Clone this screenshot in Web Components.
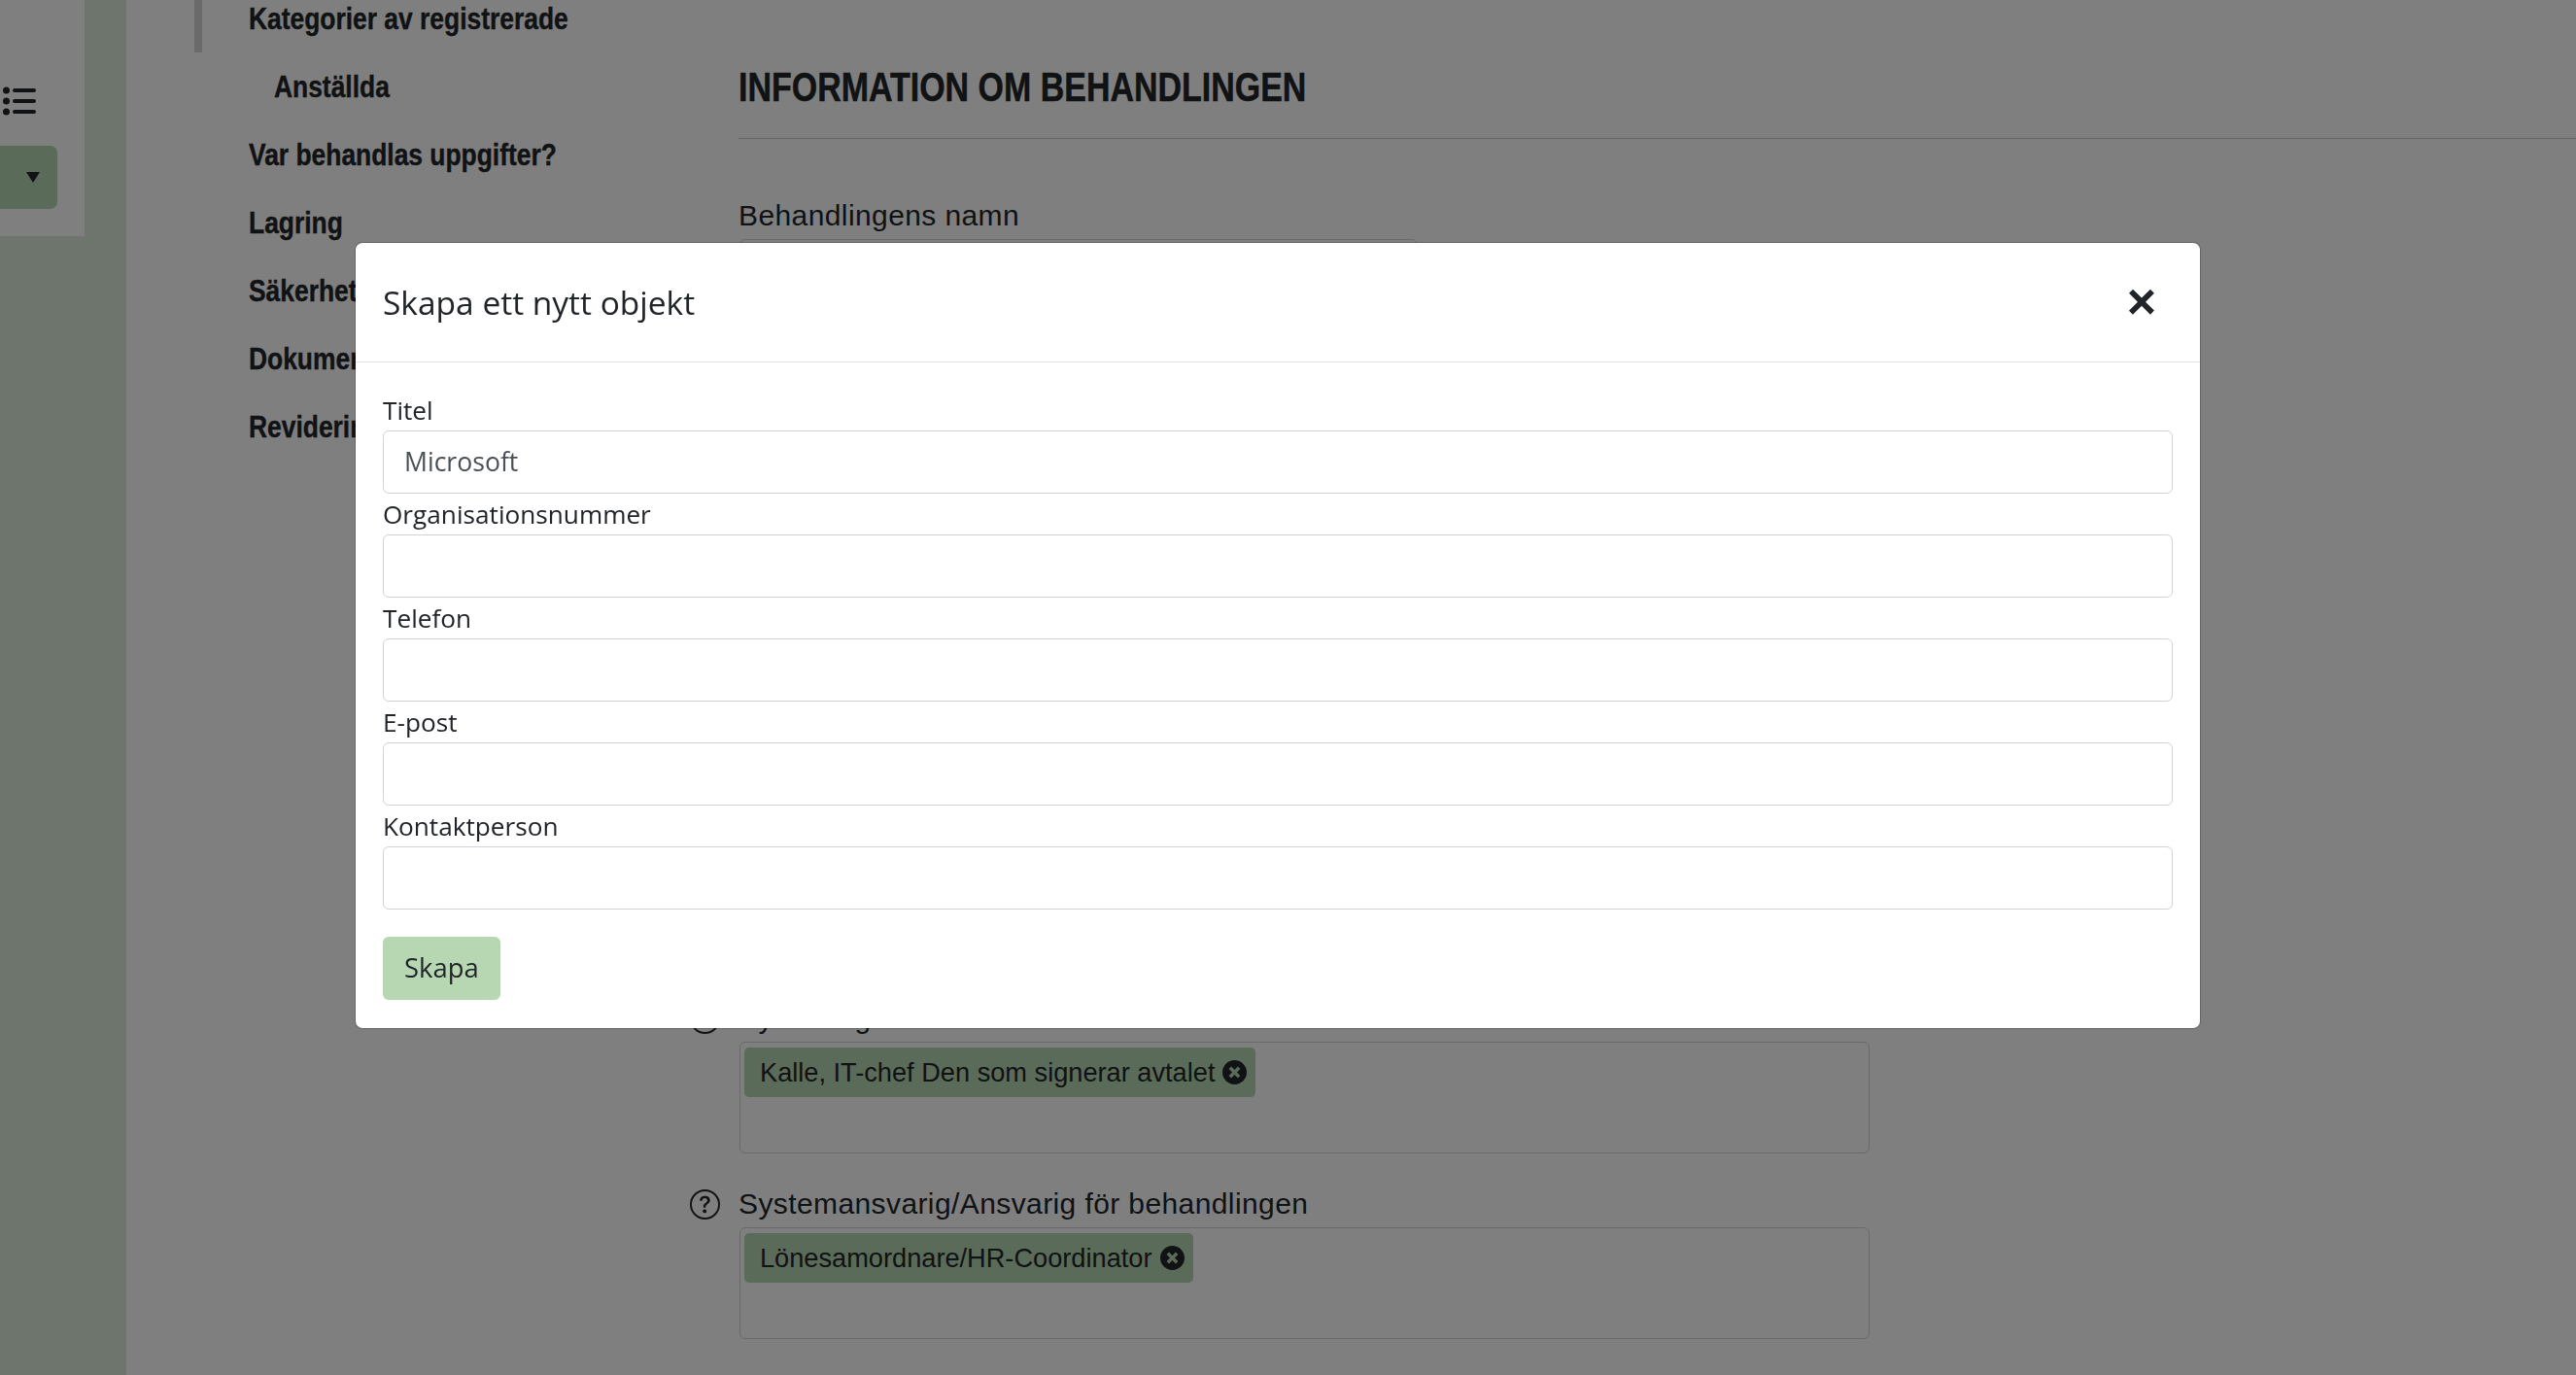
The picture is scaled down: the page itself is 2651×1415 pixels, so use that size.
<!DOCTYPE html>
<html lang="sv">
<head>
<meta charset="utf-8">
<title>Information om behandlingen</title>
<style>
  html, body { margin: 0; height: 100%; overflow: hidden; background: #fff; }
  body { color: #212529; font-family: "Liberation Sans", Arial, sans-serif; }
</style>
</head>
<body>
<app-page>
  <side-rail slot="rail"></side-rail>
  <section-nav slot="nav">
    <nav-item active>Kategorier av registrerade</nav-item>
    <nav-item sub>Anställda</nav-item>
    <nav-item>Var behandlas uppgifter?</nav-item>
    <nav-item>Lagring</nav-item>
    <nav-item>Säkerhet</nav-item>
    <nav-item>Dokumentation</nav-item>
    <nav-item>Revidering</nav-item>
  </section-nav>
  <main-panel slot="main">
    <form-field label="Behandlingens namn" kind="input"></form-field>
    <form-field label="Systemägare" help kind="tags" class="owner">
      <tag-chip>Kalle, IT-chef Den som signerar avtalet</tag-chip>
    </form-field>
    <form-field label="Systemansvarig/Ansvarig för behandlingen" help kind="tags">
      <tag-chip>Lönesamordnare/HR-Coordinator</tag-chip>
    </form-field>
  </main-panel>
</app-page>

<modal-dialog title-text="Skapa ett nytt objekt">
  <modal-field label="Titel">Microsoft</modal-field>
  <modal-field label="Organisationsnummer"></modal-field>
  <modal-field label="Telefon"></modal-field>
  <modal-field label="E-post"></modal-field>
  <modal-field label="Kontaktperson"></modal-field>
  <modal-button>Skapa</modal-button>
</modal-dialog>

<script>
class AppPage extends HTMLElement {
  constructor() {
    super();
    this.attachShadow({ mode: 'open' });
    this.shadowRoot.innerHTML = `
      <style>
        :host { display: grid; grid-template-columns: 130px 630px 1fr; height: 1415px; overflow: hidden; }
      </style>
      <slot name="rail"></slot>
      <slot name="nav"></slot>
      <slot name="main"></slot>
    `;
  }
}

class SideRail extends HTMLElement {
  constructor() {
    super();
    this.attachShadow({ mode: 'open' });
    this.shadowRoot.innerHTML = `
      <style>
        :host { display: block; background: #dbebd9; }
        .panel { width: 87px; height: 243px; background: #fff; box-sizing: border-box; padding-top: 89px; }
        svg { display: block; }
        .list { margin-left: 3px; }
        .menu {
          width: 59px; height: 65px; margin-top: 31px;
          background: #b7d7b2; border-radius: 0 7px 7px 0;
          display: flex; align-items: center; justify-content: flex-end; padding-right: 18px; box-sizing: border-box;
        }
      </style>
      <div class="panel">
        <svg class="list" width="34" height="30" viewBox="0 0 34 30" fill="#212529" stroke="#212529">
          <circle cx="3.5" cy="4" r="3.5" stroke="none"/><circle cx="3.5" cy="15" r="3.5" stroke="none"/><circle cx="3.5" cy="26" r="3.5" stroke="none"/>
          <path d="M12 4H32M12 15H32M12 26H32" stroke-width="4" stroke-linecap="round" fill="none"/>
        </svg>
        <div class="menu">
          <svg width="14" height="11" viewBox="0 0 14 11"><path d="M0 0H14L7 11Z" fill="#212529"/></svg>
        </div>
      </div>
    `;
  }
}

class SectionNav extends HTMLElement {
  constructor() {
    super();
    this.attachShadow({ mode: 'open' });
    this.shadowRoot.innerHTML = `
      <style>
        :host { display: block; margin: -16px 0 0 70px; }
      </style>
      <slot></slot>
    `;
  }
}

/* no condensed face is installed, so the bold labels are squeezed horizontally */
class NavItem extends HTMLElement {
  constructor() {
    super();
    this.attachShadow({ mode: 'open' });
    this.shadowRoot.innerHTML = `
      <style>
        :host {
          display: block; height: 70px; box-sizing: border-box;
          padding-left: 56px; white-space: nowrap;
          font: bold 32px/70px "Liberation Sans", sans-serif;
        }
        :host([active]) { border-left: 8px solid #d4d4d4; padding-left: 48px; }
        :host([sub]) { padding-left: 82px; }
        span {
          display: inline-block; transform: scaleX(.825); transform-origin: left center;
          -webkit-text-stroke: .4px currentColor;
        }
      </style>
      <span><slot></slot></span>
    `;
  }
}

class MainPanel extends HTMLElement {
  constructor() {
    super();
    this.attachShadow({ mode: 'open' });
    this.shadowRoot.innerHTML = `
      <style>
        :host { display: block; }
        header { height: 142px; border-bottom: 1px solid #ccc; }
        h1 {
          display: inline-block; margin: 59px 0 0;
          font: bold 43px/60px "Liberation Sans", sans-serif; text-transform: uppercase; white-space: nowrap;
          transform: scaleX(.79); transform-origin: left center;
          -webkit-text-stroke: .5px currentColor;
        }
      </style>
      <header><h1>Information om behandlingen</h1></header>
      <slot></slot>
    `;
  }
}

class FormField extends HTMLElement {
  constructor() {
    super();
    this.attachShadow({ mode: 'open' });
  }
  connectedCallback() {
    const label = this.getAttribute('label');
    const isTags = this.getAttribute('kind') === 'tags';
    const help = this.hasAttribute('help') ? `
      <svg class="help" width="31" height="31" viewBox="0 0 16 16" fill="#212529">
        <path d="M8 15A7 7 0 1 1 8 1a7 7 0 0 1 0 14zm0 1A8 8 0 1 0 8 0a8 8 0 0 0 0 16z"/>
        <path d="M5.255 5.786a.237.237 0 0 0 .241.247h.825c.138 0 .248-.113.266-.25.09-.656.54-1.134 1.342-1.134.686 0 1.314.343 1.314 1.168 0 .635-.374.927-.965 1.371-.673.489-1.206 1.06-1.168 1.987l.003.217a.25.25 0 0 0 .25.246h.811a.25.25 0 0 0 .25-.25v-.105c0-.718.273-.927 1.01-1.486.609-.463 1.244-.977 1.244-2.056 0-1.511-1.276-2.241-2.673-2.241-1.267 0-2.655.59-2.75 2.286zm1.557 5.763c0 .533.425.927 1.01.927.609 0 1.028-.394 1.028-.927 0-.552-.42-.94-1.029-.94-.584 0-1.009.388-1.009.94z"/>
      </svg>` : '';
    this.shadowRoot.innerHTML = `
      <style>
        :host { display: block; margin-top: 30px; }
        :host([kind="input"]) { margin-top: 57px; }
        :host(.owner) { margin-top: 715px; }
        .label {
          display: flex; align-items: center; height: 44px; margin-bottom: 2px;
          font-size: 30px; letter-spacing: .4px; white-space: nowrap;
        }
        .help { margin-left: -50px; margin-right: 19px; flex: none; }
        .box {
          width: 1163px; box-sizing: border-box; height: 115px; margin-left: 1px;
          border: 1px solid #ced4da; border-radius: 6px; padding: 5px 4px;
        }
        .box.input { width: 698px; height: 65px; }
      </style>
      <div class="label">${help}${label}</div>
      <div class="box ${isTags ? 'tags' : 'input'}"><slot></slot></div>
    `;
  }
}

class TagChip extends HTMLElement {
  constructor() {
    super();
    this.attachShadow({ mode: 'open' });
    this.shadowRoot.innerHTML = `
      <style>
        :host {
          display: inline-flex; align-items: center; gap: 8px;
          height: 51px; padding: 0 9px 0 16px; box-sizing: border-box;
          background: #b7d7b2; border-radius: 5px; font-size: 27.2px; white-space: nowrap;
        }
        svg { flex: none; }
      </style>
      <slot></slot>
      <svg width="25" height="25" viewBox="0 0 16 16">
        <circle cx="8" cy="8" r="8" fill="#212529"/>
        <path d="M5 5L11 11M11 5L5 11" stroke="#b7d7b2" stroke-width="2.2"/>
      </svg>
    `;
  }
}

class ModalDialog extends HTMLElement {
  constructor() {
    super();
    this.attachShadow({ mode: 'open' });
  }
  connectedCallback() {
    this.shadowRoot.innerHTML = `
      <style>
        :host {
          position: fixed; inset: 0; z-index: 10;
          display: flex; justify-content: center; align-items: flex-start;
          box-sizing: border-box; padding: 249px 21px 0 0;
          background: rgba(0, 0, 0, .5);
          font-family: "Open Sans", "Noto Sans", sans-serif; color: #212529;
        }
        .content {
          width: 1900px; box-sizing: border-box; background: #fff;
          border: 1px solid rgba(0, 0, 0, .2); background-clip: padding-box; border-radius: 8px;
        }
        .head {
          height: 123px; box-sizing: border-box; padding: 0 45px 0 28px;
          display: flex; align-items: center; justify-content: space-between;
          border-bottom: 1px solid #dee2e6;
        }
        h5 { margin: 0; font-size: 33.5px; font-weight: 400; }
        .close { margin-top: -2px; font: bold 52px/1 "Liberation Sans", sans-serif; color: #212529; }
        .body { padding: 28px 28px 29px; }
      </style>
      <div class="content">
        <div class="head">
          <h5>${this.getAttribute('title-text')}</h5>
          <span class="close">×</span>
        </div>
        <div class="body"><slot></slot></div>
      </div>
    `;
  }
}

class ModalField extends HTMLElement {
  constructor() {
    super();
    this.attachShadow({ mode: 'open' });
  }
  connectedCallback() {
    this.shadowRoot.innerHTML = `
      <style>
        :host { display: block; font-size: 26.2px; }
        .label { height: 42px; line-height: 42px; }
        .control {
          height: 65px; box-sizing: border-box; padding: 0 21px;
          border: 1px solid #ced4da; border-radius: 6px;
          color: #495057; font-size: 26.6px; line-height: 63px;
        }
      </style>
      <div class="label">${this.getAttribute('label')}</div>
      <div class="control" role="textbox"><slot></slot></div>
    `;
  }
}

class ModalButton extends HTMLElement {
  constructor() {
    super();
    this.attachShadow({ mode: 'open' });
    this.shadowRoot.innerHTML = `
      <style>
        :host {
          display: inline-block; margin-top: 28px; height: 65px; padding: 0 22px;
          box-sizing: border-box; background: #b7d7b2; border-radius: 6px;
          font-size: 27.4px; line-height: 63px; color: #212529;
        }
      </style>
      <slot></slot>
    `;
  }
}

customElements.define('app-page', AppPage);
customElements.define('side-rail', SideRail);
customElements.define('section-nav', SectionNav);
customElements.define('nav-item', NavItem);
customElements.define('main-panel', MainPanel);
customElements.define('form-field', FormField);
customElements.define('tag-chip', TagChip);
customElements.define('modal-dialog', ModalDialog);
customElements.define('modal-field', ModalField);
customElements.define('modal-button', ModalButton);
</script>
</body>
</html>
